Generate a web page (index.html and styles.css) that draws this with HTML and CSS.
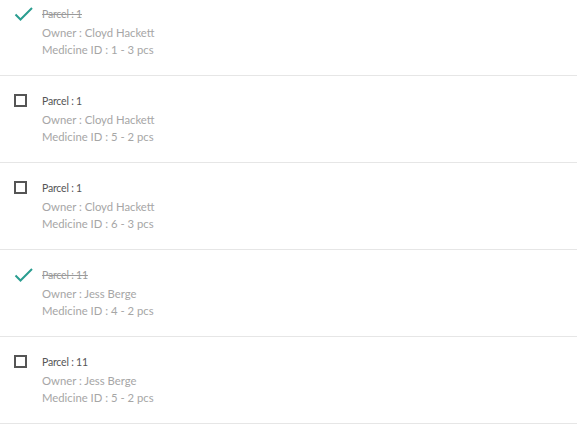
FILE: index.html
```html
<!DOCTYPE html>
<html>
<head>
<meta charset="utf-8">
<link rel="stylesheet" href="styles.css">
</head>
<body>
<ul class="list">
  <li class="row done">
    <span class="mark"><svg width="20" height="16" viewBox="0 0 20 16"><path d="M1.5 8.5 L6.5 13.5 L18 2" fill="none" stroke="#2a9d90" stroke-width="2"/></svg></span>
    <div class="info">
      <div class="title">Parcel : 1</div>
      <div class="sub">Owner : Cloyd Hackett</div>
      <div class="sub">Medicine ID : 1 - 3 pcs</div>
    </div>
  </li>
  <li class="row">
    <span class="mark"><span class="box"></span></span>
    <div class="info">
      <div class="title">Parcel : 1</div>
      <div class="sub">Owner : Cloyd Hackett</div>
      <div class="sub">Medicine ID : 5 - 2 pcs</div>
    </div>
  </li>
  <li class="row">
    <span class="mark"><span class="box"></span></span>
    <div class="info">
      <div class="title">Parcel : 1</div>
      <div class="sub">Owner : Cloyd Hackett</div>
      <div class="sub">Medicine ID : 6 - 3 pcs</div>
    </div>
  </li>
  <li class="row done">
    <span class="mark"><svg width="20" height="16" viewBox="0 0 20 16"><path d="M1.5 8.5 L6.5 13.5 L18 2" fill="none" stroke="#2a9d90" stroke-width="2"/></svg></span>
    <div class="info">
      <div class="title">Parcel : 11</div>
      <div class="sub">Owner : Jess Berge</div>
      <div class="sub">Medicine ID : 4 - 2 pcs</div>
    </div>
  </li>
  <li class="row">
    <span class="mark"><span class="box"></span></span>
    <div class="info">
      <div class="title">Parcel : 11</div>
      <div class="sub">Owner : Jess Berge</div>
      <div class="sub">Medicine ID : 5 - 2 pcs</div>
    </div>
  </li>
</ul>
</body>
</html>
```
FILE: styles.css
```css
html, body {
  margin: 0;
  padding: 0;
  background: #fff;
  font-family: Lato, "Open Sans", sans-serif;
  overflow: hidden;
}
.list {
  list-style: none;
  margin: -11px 0 0 0;
  padding: 0;
}
.row {
  display: flex;
  height: 86px;
  box-sizing: content-box;
  border-bottom: 1px solid #e6e6e6;
  padding: 0;
}
.mark {
  width: 42px;
  flex: none;
  display: flex;
  justify-content: flex-start;
  padding-left: 14px;
  box-sizing: border-box;
  padding-top: 17px;
}
.box {
  width: 13px;
  height: 13px;
  box-sizing: border-box;
  border: 2px solid #555;
  margin-top: 1px;
}
.info {
  padding-top: 16px;
}
.title {
  font-size: 10.5px;
  line-height: 18px;
  color: #555;
  letter-spacing: -0.2px;
  margin-bottom: 1px;
}
.sub {
  font-size: 11.3px;
  line-height: 17px;
  color: #a6a6a6;
}
.done .title {
  text-decoration: line-through;
  color: #9a9a9a;
}
```
